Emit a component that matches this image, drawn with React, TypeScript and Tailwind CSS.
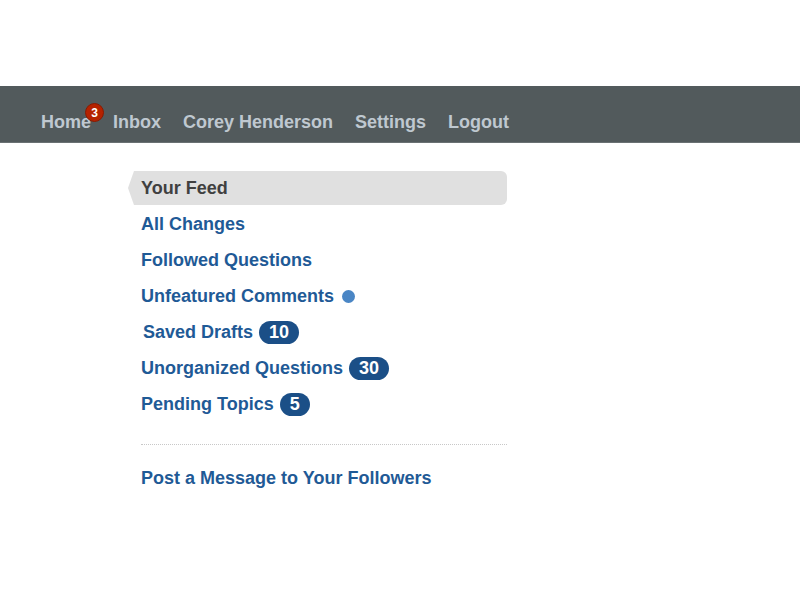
import React from 'react'

const links = [
  { label: 'All Changes' },
  { label: 'Followed Questions' },
  { label: 'Unfeatured Comments', dot: true },
  { label: 'Saved Drafts', count: 10, indent: true },
  { label: 'Unorganized Questions', count: 30 },
  { label: 'Pending Topics', count: 5 },
]

const nav = ['Inbox', 'Corey Henderson', 'Settings', 'Logout']

export default function App() {
  return (
    <div className="min-h-[600px] w-[800px] bg-white font-['Liberation_Sans',Arial,sans-serif] font-bold text-[18px]">
      <div className="h-[86px]" />
      <nav className="flex h-[57px] gap-[22px] bg-[#525a5c] pl-[41px] pt-[26px] leading-[21px] text-[#bfc8d0] border-b border-[#6a7173]">
        <span className="relative">
          Home
          <span className="absolute left-[44px] top-[-9px] flex h-[19px] w-[19px] items-center justify-center rounded-full border border-[#8a1a00] bg-[#b52200] text-[12px] leading-none text-white">
            3
          </span>
        </span>
        {nav.map((n) => (
          <span key={n}>{n}</span>
        ))}
      </nav>

      <div className="ml-[128px] mt-[28px] w-[379px]">
        <div className="flex h-[35px] items-start">
          <div className="relative ml-[6px] flex h-[34px] w-full items-center rounded-r-[6px] bg-[#e0e0e0] pl-[7px] pt-[1px] text-[#404040]">
            <span className="absolute left-[-6px] top-0 h-0 w-0 border-y-[17px] border-r-[6px] border-y-transparent border-r-[#e0e0e0]" />
            Your Feed
          </div>
        </div>
        {links.map((l) => (
          <div
            key={l.label}
            className={`flex h-9 items-center gap-[6px] text-[#1f5a96] ${l.indent ? 'pl-[15px]' : 'pl-[13px]'}`}
          >
            {l.label}
            {l.dot && <span className="ml-[2px] h-[13px] w-[13px] rounded-full bg-[#4a86c5]" />}
            {l.count !== undefined && (
              <span className="flex h-[23px] items-center rounded-full bg-[#1b4f87] px-[10px] leading-none text-white">
                {l.count}
              </span>
            )}
          </div>
        ))}
        <div className="ml-[13px] mt-[22px] border-t border-dotted border-[#c8c8c8]" />
        <div className="mt-[15px] flex h-9 items-center pl-[13px] text-[#1f5a96]">
          Post a Message to Your Followers
        </div>
      </div>
    </div>
  )
}
